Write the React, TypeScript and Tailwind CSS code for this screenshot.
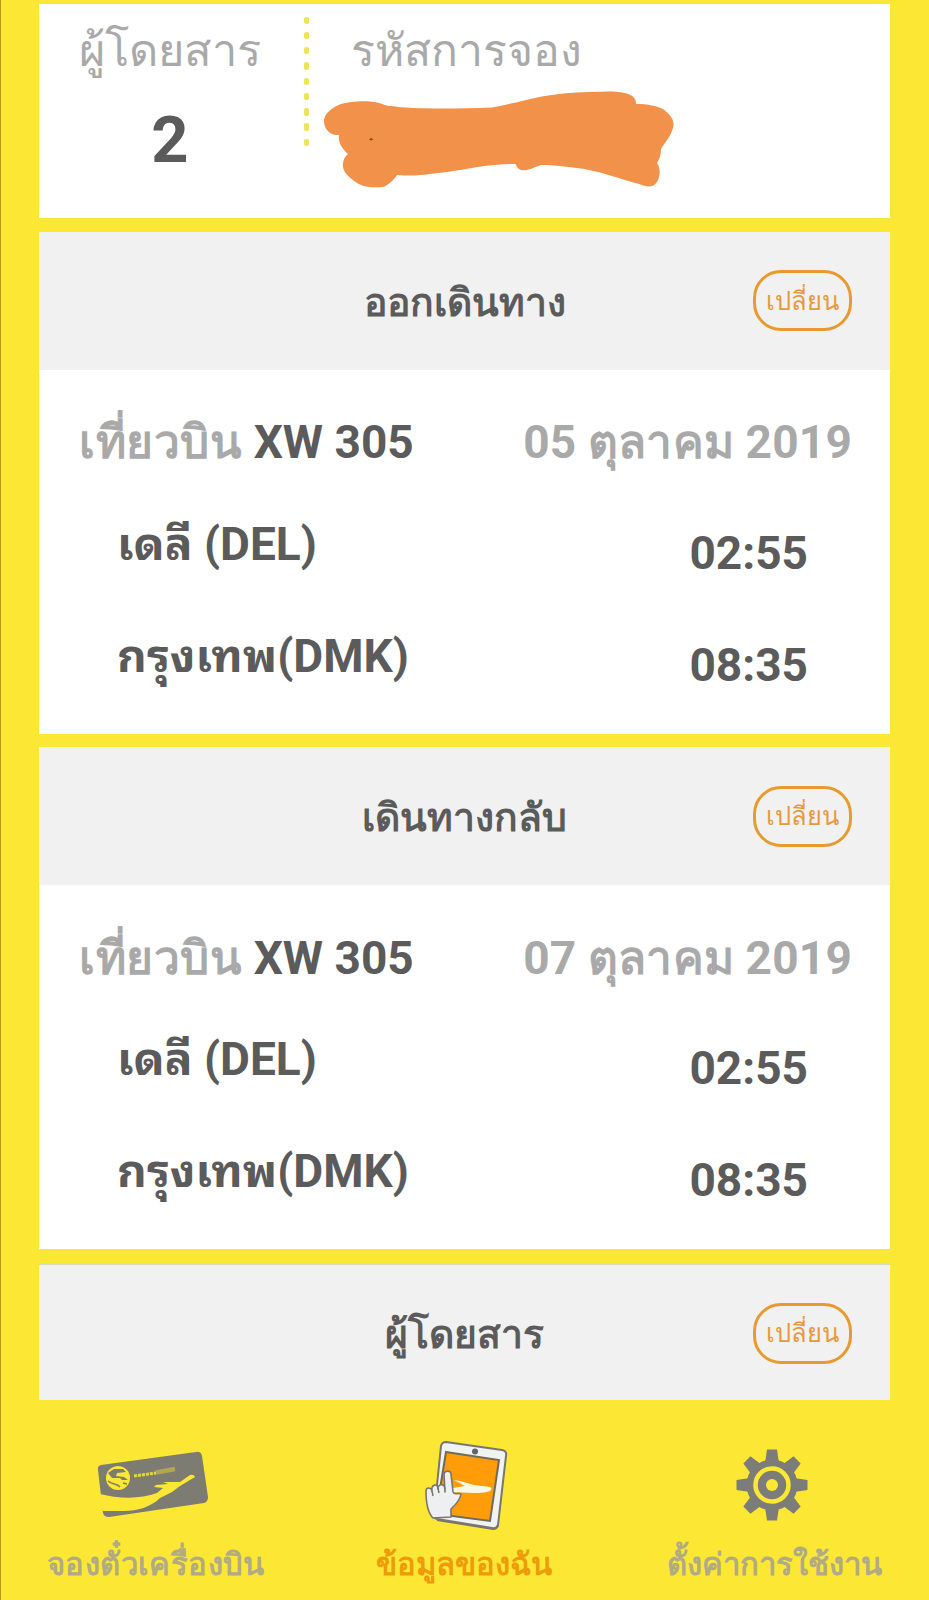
import type { ReactNode } from 'react';

type Stop = {
  city: string;
  code: string;
  time: string;
};

type Flight = {
  title: string;
  number: string;
  date: string;
  stops: Stop[];
};

const stops: Stop[] = [
  { city: 'เดลี', code: ' (DEL)', time: '02:55' },
  { city: 'กรุงเทพ', code: '(DMK)', time: '08:35' },
];

const flights: Flight[] = [
  { title: 'ออกเดินทาง', number: 'XW 305', date: '05 ตุลาคม 2019', stops },
  { title: 'เดินทางกลับ', number: 'XW 305', date: '07 ตุลาคม 2019', stops },
];

const ChangeButton = () => (
  <button
    type="button"
    className="flex h-[61px] w-[99px] items-center justify-center rounded-[28px] border-[3px] border-[#e99a2e] pt-[2px] text-[25.5px] leading-none font-normal text-[#e59a3c]"
  >
    เปลี่ยน
  </button>
);

const SectionHeader = ({ title }: { title: string }) => (
  <div className="grid h-[138px] grid-cols-[1fr_auto_1fr] items-center bg-[#f1f1f1] pr-[38px]">
    <span className="col-start-2 pt-[5px] pl-[38px] text-[39px] leading-none font-bold">
      {title}
    </span>
    <div className="flex justify-end">
      <ChangeButton />
    </div>
  </div>
);

const FlightCard = ({ flight }: { flight: Flight }) => (
  <section className="h-[502px] bg-white text-[46px] leading-[56px] font-bold">
    <SectionHeader title={flight.title} />
    <div className="flex items-baseline justify-between pt-[44.5px] pr-[38px] pl-[40px]">
      <p className="text-[#a9a9a9]">
        <span className="tracking-[0.6px]">เที่ยวบิน </span>
        <span className="text-[#5b5b5b]">{flight.number}</span>
      </p>
      <p className="tracking-[0.2px] text-[#a9a9a9]">{flight.date}</p>
    </div>
    <div className="flex flex-col gap-[47px] pt-[45.5px] pr-[82px] pl-[78px] font-['Roboto','Noto_Sans_Thai_Looped',sans-serif]">
      {flight.stops.map((stop) => (
        <div key={stop.city} className="flex h-[65px] justify-between">
          <p>
            {stop.city}
            {stop.code}
          </p>
          <p className="pt-[9px]">{stop.time}</p>
        </div>
      ))}
    </div>
  </section>
);

// orange marker stroke hiding the booking code
const Scribble = () => (
  <svg viewBox="320 88 356 104" className="h-[104px] w-[356px]" aria-hidden="true">
    <path
      fill="#f2924a"
      d="M324 121C324 114 331 108 341 104C350 101 370 100 379 103C384 104 386 106 391 106C410 109 450 109 492 107.500C520 103 540 93 590 92C612 91 637 90 636 104C648 104 657 106 663 109C671 115 674 120 673.500 126C671 137 665 142 661 149C661 155 659 160 657 163C661 168 660 177 657 182C653 188 647 187 639 184C620 179 597 170 577 168C562 166 552 165 541 165C535 167 524 173 519 169C516 167 517 165 515 164C485 164 465 170 447 172C432 173 420 177 397 175C393 181 387 186 383 187C370 188 362 187 354 181C344 173 340 168 345 157L348 154C342 148 338 143 339 135C330 136 324 129 324 121Z"
    />
    <path fill="#8a4a1d" d="M369 139.500L371 138L373.500 139.500L371 140.500Z" />
  </svg>
);

const CardIcon = () => (
  <svg viewBox="95 1450 116 72" className="-ml-[6px] h-[72px] w-[116px]" aria-hidden="true">
    <path
      fill="#7c7c72"
      d="M101 1466L196 1453Q201 1452 202 1457L208 1498Q208 1503 204 1504L109 1518Q104 1518 103 1514L98 1471Q97 1467 101 1466Z"
    />
    <path
      fill="#fde735"
      d="M100 1495C119 1500 141 1500 157 1494L163 1489L154 1488L156 1486L168 1485L163 1483L180 1483L190 1476Q194 1475 195 1478L180 1487L172 1493L160 1499C151 1508 137 1512 124 1512L102.500 1512Z"
    />
    <circle cx="118" cy="1479" r="12" fill="#fde735" />
    <path
      fill="#7c7c72"
      d="M108 1474L114 1470L123 1470L126 1473L117 1474L116 1477L124 1478L128 1481L122 1481L120 1479L112 1479Z"
    />
    <path
      fill="none"
      stroke="#7c7c72"
      strokeWidth="1.500"
      d="M108 1482C112 1486 117 1484 120 1488M123 1484L127 1485"
    />
    <path stroke="#e8d83a" strokeWidth="3" strokeDasharray="3 1" d="M134 1477L156 1474" />
    <path stroke="#b3a651" strokeWidth="4.500" d="M156 1473.500L175 1470" />
  </svg>
);

const TabletIcon = () => (
  <svg viewBox="420 1436 92 96" className="h-[96px] w-[92px]" aria-hidden="true">
    <path
      fill="#f1f2f2"
      stroke="#77776f"
      strokeWidth="2"
      d="M446 1441L502 1449Q507 1450 506 1455L498 1524Q497 1528 492 1527L437 1518Q433 1517 434 1513L441 1445Q442 1441 446 1441Z"
    />
    <path fill="none" stroke="#77776f" strokeWidth="2" d="M437 1519L493 1528Q497 1528 498 1524" />
    <path fill="#ff9c07" stroke="#6d6a5f" strokeWidth="2" d="M446 1451L499 1459L490 1520L436 1513Z" />
    <circle cx="475" cy="1450.500" r="3" fill="#63636b" />
    <path
      fill="#fdf8e7"
      d="M453 1487L465 1485L454 1479L460 1480L474 1484L490 1486Q493 1487 490 1490Q485 1492 473 1492L452 1491Z"
    />
    <path
      fill="#eeeff0"
      stroke="#77776f"
      strokeWidth="1.600"
      strokeLinejoin="round"
      d="M445 1491L444 1474C444 1469 451 1469 451 1473L453 1491C455 1495 458 1491 461 1493C460 1500 455 1504 451 1508L451 1516L433 1517C428 1512 426 1503 426 1490C426 1486 431 1486 432 1490C431 1483 438 1482 438 1488C438 1483 444 1482 445 1487Z"
    />
    <path stroke="#77776f" strokeWidth="1.500" d="M432 1490L433 1495M438 1487L439 1492" />
  </svg>
);

const GearIcon = () => (
  <svg viewBox="-37 -37 74 74" className="-ml-[5px] h-[74px] w-[74px]" aria-hidden="true">
    <g fill="#7c7c78">
      <circle r="25.500" />
      {[0, 45, 90, 135, 180, 225, 270, 315].map((angle) => (
        <path key={angle} transform={`rotate(${angle})`} d="M-7 -22L-5 -35.500H5L7 -22Z" />
      ))}
    </g>
    <circle r="16.500" fill="none" stroke="#fde735" strokeWidth="4.500" />
    <circle r="6" fill="#fde735" />
  </svg>
);

const NavItem = ({ icon, children }: { icon: ReactNode; children: ReactNode }) => (
  <a href="#" className="flex flex-col items-center">
    <div className="flex h-[100px] items-center">{icon}</div>
    {children}
  </a>
);

export default function App() {
  return (
    <div className="h-[1600px] w-[929px] overflow-hidden border-l border-[#b39b14] bg-[#fde735] pt-[4px] pr-[39px] pl-[38px] font-['Roboto','Noto_Sans',sans-serif] text-[#5b5b5b]">
      <main className="flex flex-col">
        <section className="flex h-[214px] bg-white">
          <div className="flex w-[262px] flex-col items-center pt-[19px]">
            <p className="text-[45.2px] leading-[56px] text-[#a9a9a9]">ผู้โดยสาร</p>
            <p className="pt-[23px] text-[65px] leading-[76px] font-bold">2</p>
          </div>
          <div className="flex w-[10px] flex-col items-center gap-[7.9px] pt-[12.5px]">
            {Array.from({ length: 9 }, (_, i) => (
              <span key={i} className="h-[7.4px] w-[5px] shrink-0 rounded-[2px] bg-[#eee35c]" />
            ))}
          </div>
          <div className="pt-[19px] pl-[9px]">
            <p className="pl-[31px] text-[44.5px] leading-[56px] text-[#a9a9a9]">รหัสการจอง</p>
            <div className="pt-[9px]">
              <Scribble />
            </div>
          </div>
        </section>

        {flights.map((flight) => (
          <div key={flight.title} className="pt-[13.5px]">
            <FlightCard flight={flight} />
          </div>
        ))}

        <section className="mt-[14px] h-[137px] overflow-hidden border-t-2 border-[#dcd9bd]">
          <div className="-mt-[1px]">
            <SectionHeader title="ผู้โดยสาร" />
          </div>
        </section>
      </main>

      <nav className="-mx-[38px] grid grid-cols-[310px_309px_309px] pt-[35px] text-[31px] leading-[40px] font-bold text-[#b0ab85]">
        <NavItem icon={<CardIcon />}>
          <span className="pt-[10px] tracking-[0.4px]">จองตั๋วเครื่องบิน</span>
        </NavItem>
        <NavItem icon={<TabletIcon />}>
          <span className="pt-[10px] pr-[3px] text-[#ee9b0a]">ข้อมูลของฉัน</span>
        </NavItem>
        <NavItem icon={<GearIcon />}>
          <span className="pt-[10px]">ตั้งค่าการใช้งาน</span>
        </NavItem>
      </nav>
    </div>
  );
}
